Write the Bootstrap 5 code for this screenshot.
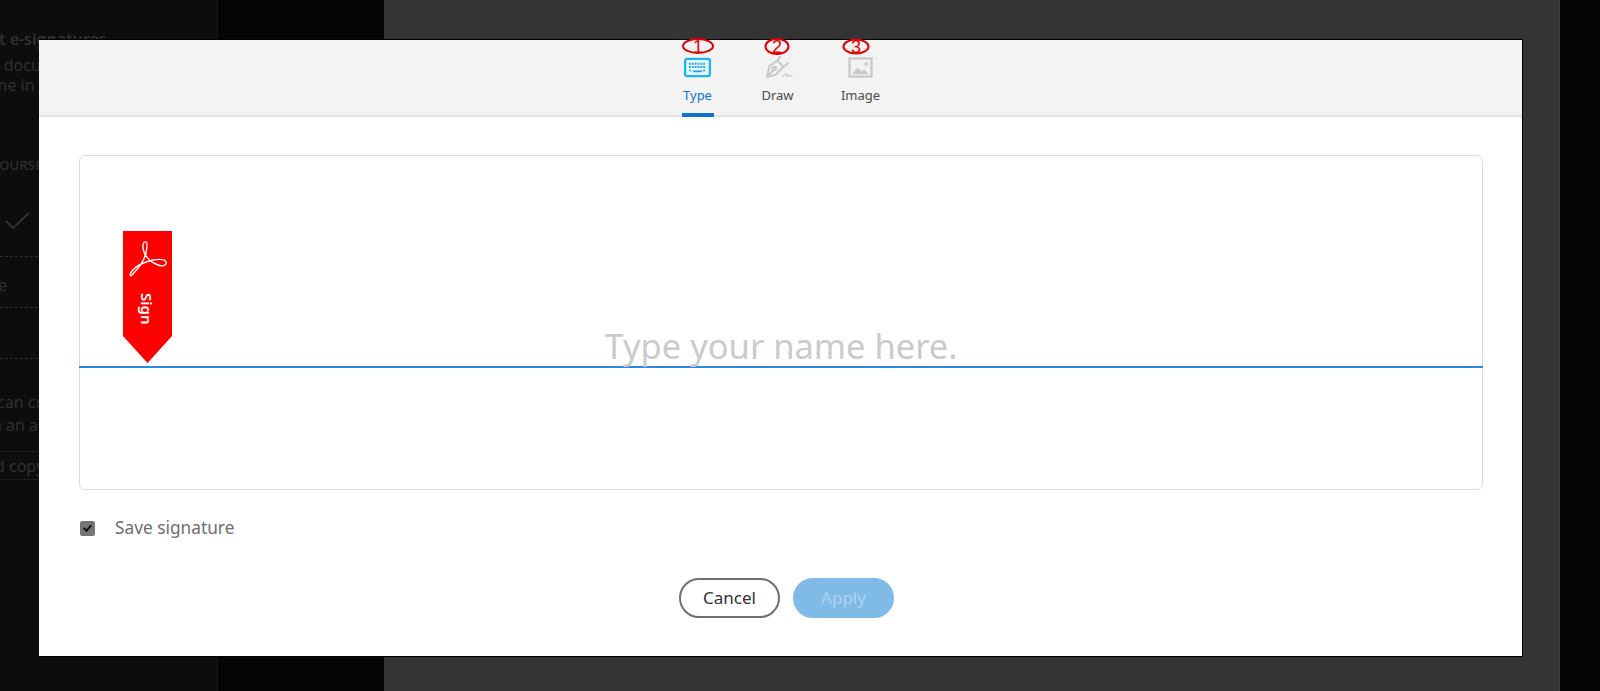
<!DOCTYPE html>
<html lang="en">
<head>
<meta charset="utf-8">
<title>Sign</title>
<link href="https://cdn.jsdelivr.net/npm/bootstrap@5.3.0/dist/css/bootstrap.min.css" rel="stylesheet">
<style>
html,body{height:100%;margin:0;overflow:hidden;background:#000;font-family:"Noto Sans","Open Sans",sans-serif}
.stage{position:relative;height:691px;width:1600px;overflow:hidden}
.side-a{width:218px;background:#0d0d0d;border-right:1px solid #161616;color:#303030;font-size:16px;overflow:hidden;white-space:nowrap}
.side-b{width:166px;background:#040404}
.mid{width:1176px;background:#343434;border-right:1px solid #404040}
.end{width:40px;background:#040404}
.bg-title{font-weight:600;margin:28px 0 0 -22px;line-height:22px}
.bg-line{margin-left:-38px;line-height:20px}
.bg-l1{margin-top:5px}
.bg-l2{margin-left:-22px}
.bg-head{font-size:13px;font-weight:500;letter-spacing:.2px;margin:60px 0 0 -9px;line-height:20px;color:#2f2f2f}
.bg-check{margin:36px 0 0 5px;display:block}
.bg-rule{border-top:1px dashed #2e2e2e}
.bg-solid{border-top-style:solid;border-color:#1c1c1c}
.r1{margin-top:27px}
.r2{margin-top:50px}
.r3{margin-top:14px}
.r4{margin-top:2px}
.bg-e{margin:18px 0 12px -2px}
.bg-c1{margin:32px 0 0 -3px;line-height:23px}
.bg-c2{margin:0 0 0 -8px;line-height:23px}
.bg-c3{margin:3px 0 0 -5px;line-height:22px}
.sign-dialog{position:absolute;left:39px;top:39px;width:1484px;height:618px;background:#fff;border-top:1px solid #000;border-right:1px solid #000;border-bottom:1px solid #000;display:flex;flex-direction:column}
.tab-bar{height:77px;background:#f3f3f3;border-bottom:2px solid #e2e2e2;flex:none}
.tab-item{position:relative;height:75px;display:flex;flex-direction:column;align-items:center;font-size:13px;color:#4b4b4b;text-decoration:none;padding-top:17px}
.tab-item:hover{color:#4b4b4b}
.tab-item svg.ico{display:block;height:21px;width:29px;overflow:visible}
.tab-item span.lbl{line-height:18px;margin-top:8px}
.tab-item.on,.tab-item.on:hover{color:#0d74cf}
.tab-item.on::after{content:"";position:absolute;left:0;right:0;bottom:-2px;height:4px;background:#0d74cf}
.mark-one{position:absolute;top:-2px;left:50%;transform:translateX(-50%);overflow:visible}
.mark-one text{font-family:"Liberation Sans",sans-serif;font-size:18px;fill:#e00000}
.m2{left:calc(50% - 1px)}
.m3{left:calc(50% - 5px)}
.t1{width:32px;margin-right:48px}
.t2{width:32px;margin-right:48px}
.t3{width:38px}
.sig-box{position:relative;margin:38px 39px 0 40px;height:335px;border:1px solid #dcdcdc;border-radius:6px;background:#fff}
.sig-line{height:212px;border-bottom:2px solid #2d87de;display:flex;justify-content:center;align-items:flex-end;margin:0 -1px}
.sig-hint{font-size:34.500px;line-height:36px;color:#cbcbcb;position:relative;top:-2px}
.sign-tag{position:absolute;left:43px;top:75px;width:49px;height:132px;background:#f00;clip-path:polygon(0 0,100% 0,100% 105px,50% 132px,0 105px);color:#fff}
.sign-tag svg{position:absolute;left:6px;top:10px}
.sign-tag span{position:absolute;left:14px;top:62px;writing-mode:vertical-rl;font-size:15px;font-weight:600;line-height:20px}
.save-row{margin:26px 0 0 41px;display:flex;align-items:center;min-height:0;padding:0}
.save-row .form-check-input{width:15px;height:15px;margin:0;float:none;background-color:#757575;border-color:#757575;border-radius:2px;background-image:url("data:image/svg+xml,%3csvg xmlns='http://www.w3.org/2000/svg' viewBox='0 0 20 20'%3e%3cpath fill='none' stroke='%23111' stroke-linecap='round' stroke-linejoin='round' stroke-width='3.2' d='m5 10 3.5 3.5L15 6'/%3e%3c/svg%3e")}
.save-row .form-check-label{margin-left:20px;font-size:17.300px;line-height:24px;color:#6e6e6e}
.act-row{margin-top:38px;gap:13px;padding-left:12px}
.act-btn{width:101px;height:40px;border-radius:20px;font-size:17px;padding:0;line-height:36px}
.act-row .act-cancel{background:#fff;border:2px solid #707070;color:#323232}
.act-row .act-apply:disabled{background:#80bbe8;border:2px solid #80bbe8;color:#aed3f0;opacity:1}
</style>
</head>
<body>
<div class="stage d-flex">
  <div class="side-a flex-none">
    <div class="bg-title">Get e-signatures</div>
    <div class="bg-line bg-l1">Send documents</div>
    <div class="bg-line bg-l2">done in 3 steps</div>
    <div class="bg-head">COURSES</div>
    <svg class="bg-check" width="26" height="18" viewBox="0 0 26 18"><path d="M1 10l7 7L24 2" fill="none" stroke="#3c3c3c" stroke-width="1.500"/></svg>
    <div class="bg-rule r1"></div>
    <div class="bg-line bg-e">e</div>
    <div class="bg-rule"></div>
    <div class="bg-rule r2"></div>
    <div class="bg-line bg-c1">can create</div>
    <div class="bg-line bg-c2">n an audit</div>
    <div class="bg-rule bg-solid r3"></div>
    <div class="bg-line bg-c3">d copy</div>
    <div class="bg-rule bg-solid r4"></div>
  </div>
  <div class="side-b"></div>
  <div class="mid"></div>
  <div class="end"></div>

  <div class="sign-dialog">
    <nav class="tab-bar nav justify-content-center">
      <a class="tab-item on t1" href="#">
        <svg class="mark-one" width="32" height="17" viewBox="0 0 32 17"><ellipse cx="16" cy="8" rx="15" ry="7" fill="none" stroke="#e00000" stroke-width="2"/><text x="16" y="15" text-anchor="middle">1</text></svg>
        <svg class="ico" viewBox="0 0 30 22"><rect x="2" y="2" width="26" height="18" rx="2" fill="#e8f7fe" stroke="#1ab5f3" stroke-width="2.400"/><path d="M6 7h18M6 10.500h18M6 14h3M21 14h3" stroke="#2aa5e8" stroke-width="2" stroke-dasharray="2 1"/><path d="M10 15h10" stroke="#2aa5e8" stroke-width="2"/></svg>
        <span class="lbl">Type</span>
      </a>
      <a class="tab-item t2" href="#">
        <svg class="mark-one m2" width="26" height="18" viewBox="0 0 26 18"><ellipse cx="13" cy="8.500" rx="11.500" ry="7.500" fill="none" stroke="#e00000" stroke-width="2"/><text x="13" y="15" text-anchor="middle">2</text></svg>
        <svg class="ico" viewBox="0 0 30 22"><g fill="none" stroke="#cacaca" stroke-width="2.200" stroke-linejoin="round"><path d="M4 21 6.500 9.500 15 3.500 21 10.500 13 18.500Z"/><path d="M4.500 20.500 11 13.500"/><circle cx="11.500" cy="12" r="1.800"/><path d="M15.500 3 18-1M20.500 10.500 27 6"/></g><path d="M20 21c2-1 3-5 4-3s0 3 1.500 2 1.500-2 2-1 1.500 1.500 3 0" fill="none" stroke="#cacaca" stroke-width="1.300"/></svg>
        <span class="lbl">Draw</span>
      </a>
      <a class="tab-item t3" href="#">
        <svg class="mark-one m3" width="28" height="18" viewBox="0 0 28 18"><ellipse cx="14" cy="8.500" rx="12.500" ry="7" fill="none" stroke="#e00000" stroke-width="2"/><text x="14" y="15" text-anchor="middle">3</text></svg>
        <svg class="ico" viewBox="0 0 30 22"><rect x="3.500" y="1.500" width="23" height="19" fill="none" stroke="#cacaca" stroke-width="2.500"/><path d="M6 18l6-7 4 4 3-2 5 5z" fill="#cacaca"/><circle cx="21" cy="7" r="2" fill="#cacaca"/></svg>
        <span class="lbl">Image</span>
      </a>
    </nav>

    <div class="sig-box">
      <div class="sig-line"><span class="sig-hint">Type your name here.</span></div>
      <div class="sign-tag">
        <svg width="38" height="38" viewBox="0 0 38 38"><path d="M3 34C9 28 15 20 17 12 18 6 19 2 17 1 14 0 13 5 15 11 17 17 23 22 29 24 34 26 38 24 37 21 36 18 30 18 24 19 15 21 7 25 3 30 0 34 1 36 3 34Z" fill="none" stroke="#fff" stroke-width="1.400"/></svg>
        <span>Sign</span>
      </div>
    </div>

    <div class="form-check save-row">
      <input class="form-check-input" type="checkbox" id="saveSig" checked>
      <label class="form-check-label" for="saveSig">Save signature</label>
    </div>

    <div class="d-flex justify-content-center act-row">
      <button type="button" class="btn act-btn act-cancel">Cancel</button>
      <button type="button" class="btn act-btn act-apply" disabled>Apply</button>
    </div>
  </div>
</div>
<script src="https://cdn.jsdelivr.net/npm/bootstrap@5.3.0/dist/js/bootstrap.bundle.min.js"></script>
</body>
</html>
